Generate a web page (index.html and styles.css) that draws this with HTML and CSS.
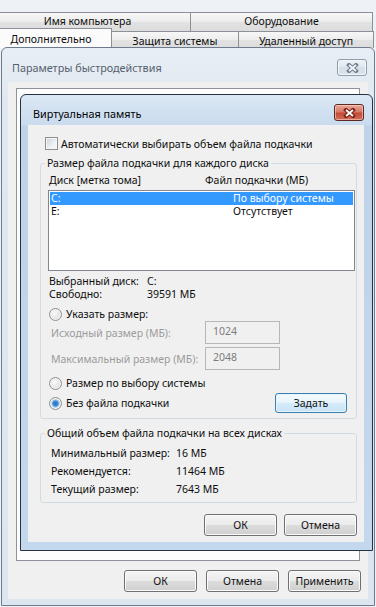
FILE: index.html
```html
<!DOCTYPE html>
<html lang="ru">
<head>
<meta charset="utf-8">
<link rel="stylesheet" href="styles.css">
</head>
<body>
<div class="tabs">
  <div class="tabrow row1">
    <div class="tab t-name">Имя компьютера</div>
    <div class="tab t-hw">Оборудование</div>
  </div>
  <div class="tabrow row2">
    <div class="tab sel t-adv">Дополнительно</div>
    <div class="tab t-prot">Защита системы</div>
    <div class="tab t-rem">Удаленный доступ</div>
  </div>
</div>

<div class="win perf">
  <div class="titlebar">
    <span class="title">Параметры быстродействия</span>
    <span class="closebtn inactive">
      <svg width="13" height="10" viewBox="0 0 13 10"><path d="M3 2 L10 8 M10 2 L3 8" stroke="#6f7f92" stroke-width="4" stroke-linecap="square"/><path d="M3 2 L10 8 M10 2 L3 8" stroke="#f4f7fa" stroke-width="1.8"/></svg>
    </span>
  </div>
  <div class="client">
    <div class="panel"></div>
    <div class="btnrow">
      <button class="btn">ОК</button>
      <button class="btn">Отмена</button>
      <button class="btn">Применить</button>
    </div>
  </div>
</div>

<div class="win vm">
  <div class="titlebar">
    <span class="title">Виртуальная память</span>
    <span class="closebtn active">
      <svg width="13" height="10" viewBox="0 0 13 10"><path d="M3 2 L10 8 M10 2 L3 8" stroke="#7a2318" stroke-width="4" stroke-linecap="square"/><path d="M3 2 L10 8 M10 2 L3 8" stroke="#ffffff" stroke-width="1.8"/></svg>
    </span>
  </div>
  <div class="client">
    <label class="check-row"><span class="checkbox"></span>Автоматически выбирать объем файла подкачки</label>

    <fieldset class="group g1">
      <legend>Размер файла подкачки для каждого диска</legend>
      <div class="cols"><span class="c1">Диск [метка тома]</span><span>Файл подкачки (МБ)</span></div>
      <div class="listbox">
        <div class="lrow selrow"><span class="c1">C:</span><span>По выбору системы</span></div>
        <div class="lrow"><span class="c1">E:</span><span>Отсутствует</span></div>
      </div>
      <div class="info first"><span class="k">Выбранный диск:</span><span>C:</span></div>
      <div class="info"><span class="k">Свободно:</span><span>39591 МБ</span></div>
      <div class="radio-row r-custom"><span class="radio"></span>Указать размер:</div>
      <div class="field f1"><span class="flabel">Исходный размер (МБ):</span><span class="input">1024</span></div>
      <div class="field f2"><span class="flabel">Максимальный размер (МБ):</span><span class="input">2048</span></div>
      <div class="radio-row r-sys"><span class="radio"></span>Размер по выбору системы</div>
      <div class="radio-row r-none"><span class="radio on"></span>Без файла подкачки<button class="btn def">Задать</button></div>
    </fieldset>

    <fieldset class="group g2">
      <legend>Общий объем файла подкачки на всех дисках</legend>
      <div class="trow"><span class="k">Минимальный размер:</span><span>16 МБ</span></div>
      <div class="trow"><span class="k">Рекомендуется:</span><span>11464 МБ</span></div>
      <div class="trow"><span class="k">Текущий размер:</span><span>7643 МБ</span></div>
    </fieldset>

    <div class="btnrow vmbtns">
      <button class="btn">ОК</button>
      <button class="btn">Отмена</button>
    </div>
  </div>
</div>
</body>
</html>
```

FILE: styles.css
```css
* { box-sizing: border-box; margin: 0; padding: 0; }
html, body { width: 376px; height: 607px; overflow: hidden; }
body {
  position: relative;
  font-family: "Noto Sans", "Segoe UI", sans-serif;
  font-size: 10.5px;
  line-height: 14px;
  color: #0d0d0d;
  background: #eef2f7;
  white-space: nowrap;
}

/* ---------- system properties tabs ---------- */
.tabs { padding-top: 12px; height: 48px; }
.tabrow { display: flex; }
.row1 { height: 19px; }
.row2 { margin-top: -3px; align-items: flex-start; }
.tab {
  border: 1px solid #8c9099;
  border-bottom: none;
  background: linear-gradient(#f7f7f7, #ececec 50%, #e2e2e2 50%, #dcdcdc);
  text-align: center;
  line-height: 17px;
  flex: none;
}
.row1 .tab { height: 19px; }
.t-name { margin-left: -16px; width: 207px; }
.t-hw { width: 183px; margin-left: -1px; }
.row2 .tab { height: 17px; margin-top: 3px; padding-top: 1px; }
.row2 .tab.sel { height: 20px; margin-top: 0; padding-top: 2px; background: #fbfbfb; }
.t-adv { margin-left: -10px; width: 122px; }
.t-prot { width: 128px; margin-left: -1px; }
.t-rem { width: 136px; margin-left: -1px; }

/* ---------- windows ---------- */
.win { position: absolute; display: flex; flex-direction: column; }
.perf {
  left: 1px; top: 47px; width: 374px; height: 559px;
  border: 1px solid #6d7b8c;
  border-radius: 6px 6px 0 0;
  background: linear-gradient(#e8eef5, #dfe7f0 60px, #dde5ef);
}
.perf .titlebar { height: 34px; padding: 11px 7px 0 10px; }
.titlebar { display: flex; justify-content: space-between; align-items: flex-start; flex: none; }
.perf .title { color: #56606c; font-size: 10.8px; line-height: 16px; margin-top: 1px; }
.closebtn {
  width: 30px; height: 17px;
  border-radius: 3px;
  display: flex; align-items: center; justify-content: center;
}
.closebtn.inactive {
  border: 1px solid #8d9caf;
  background: linear-gradient(#eef2f6, #e1e7ee 50%, #d6dee8 50%, #dbe2ea);
  box-shadow: inset 0 0 0 1px #f4f7fa;
}
.closebtn.active {
  border: 1px solid #5b2a24;
  background: linear-gradient(#eaa899, #d67968 45%, #c24a36 55%, #d2715c);
  box-shadow: inset 0 0 0 1px rgba(255,220,210,.55);
}
.perf .client {
  flex: 1;
  margin: 0 6px 7px 6px;
  background: #f0f0f0;
  padding: 6px 7px 7px 8px;
  display: flex; flex-direction: column;
}
.panel {
  height: 473px;
  border: 1px solid #8e939c;
  background: #fdfdfd;
  margin-right: 1px;
}
.btnrow { display: flex; justify-content: flex-end; gap: 9px; margin-top: 9px; }
.btn {
  font: inherit;
  color: #111;
  width: 73px; height: 22px;
  border: 1px solid #707070;
  border-radius: 3px;
  background: linear-gradient(#f4f4f4, #ebebeb 50%, #dddddd 50%, #cfcfcf);
  box-shadow: inset 0 0 0 1px #fbfbfb;
  line-height: 18px;
}
.btn.def {
  width: 72px; height: 20px;
  border-color: #3c7fb1;
  background: linear-gradient(#f5fbfe, #e6f3fc 50%, #d5ebfa 50%, #c8e4f7);
  box-shadow: inset 0 0 0 1px #e4f4fd;
  margin-left: auto;
  line-height: 16px;
}

/* ---------- virtual memory dialog ---------- */
.vm {
  left: 20px; top: 94px; width: 353px; height: 457px;
  border: 1px solid #26323f;
  border-radius: 6px 6px 0 0;
  background: linear-gradient(#dbe7f4, #c9dbee 30px, #bed3ea 31px, #c3d7ed);
}
.vm .titlebar { height: 30px; padding: 9px 8px 0 12px; }
.vm .title { color: #000; font-size: 10.8px; line-height: 16px; margin-top: 2px; }
.vm .client {
  flex: 1;
  margin: 0 8px 8px 7px;
  background: #f0f0f0;
  padding: 12px 7px 4px 12px;
  display: flex; flex-direction: column;
}
.check-row { display: flex; align-items: center; height: 13px; padding-left: 5px; gap: 3px; }
.checkbox {
  width: 13px; height: 13px; flex: none;
  border: 1px solid #8e8f8f;
  background: linear-gradient(135deg, #cdd0d4, #eef0f2 60%, #f8f8f8);
  box-shadow: inset 0 0 0 1px #f6f6f6;
}

.group {
  border: 1px solid #d3dbe2;
  border-radius: 3px;
  min-width: 0;
}
.group legend { padding: 0 2px; line-height: 14px; }
.g1 { margin-top: 6px; padding: 3px 1px 5px 7px; }
.g1 legend { margin-left: -3px; }
.cols { display: flex; padding-left: 1px; height: 14px; }
.cols .c1 { width: 156px; flex: none; }
.listbox {
  margin-top: 3px;
  height: 81px;
  border: 1px solid #828790;
  background: #fff;
  padding: 1px;
}
.lrow { display: flex; height: 13px; line-height: 13px; padding-left: 1px; }
.lrow .c1 { width: 182px; flex: none; }
.selrow { background: #3399ff; color: #fff; }
.info { display: flex; height: 13px; line-height: 13px; padding-left: 1px; }
.info.first { margin-top: 4px; }
.info .k { width: 98px; flex: none; }
.radio-row { display: flex; align-items: center; gap: 4px; padding-left: 1px; height: 14px; }
.radio {
  width: 13px; height: 13px; flex: none;
  border-radius: 50%;
  border: 1px solid #8e8f8f;
  background: radial-gradient(circle at 40% 40%, #fafafa, #e3e3e3 60%, #cfd1d4);
  box-shadow: inset 0 0 0 1px #f4f4f4;
}
.radio.on { background: radial-gradient(circle at 50% 50%, #2c6fb8 0, #3f8fd6 2.5px, #a9cdee 3.8px, #eaeaea 4.8px, #d6d8db); }
.r-custom { margin-top: 6px; }
.r-sys { margin-top: 6px; }
.r-none { margin-top: 3px; height: 20px; padding-right: 8px; }
.field { display: flex; align-items: center; height: 23px; padding-left: 3px; }
.f2 { margin-top: 3px; }
.flabel { width: 154px; flex: none; color: #9b9b9b; }
.input {
  width: 75px; height: 23px;
  border: 1px solid #b3b7ba;
  background: #f0f0f0;
  color: #7c7c7c;
  padding-left: 7px;
  line-height: 18px;
}

.g2 { margin-top: 7px; padding: 4px 1px 4px 10px; }
.g2 legend { margin-left: -6px; }
.trow { display: flex; height: 18px; line-height: 18px; }
.trow .k { width: 125px; flex: none; }

.vmbtns { margin-top: 11px; gap: 7px; }
.vmbtns .btn { height: 22px; }
```
